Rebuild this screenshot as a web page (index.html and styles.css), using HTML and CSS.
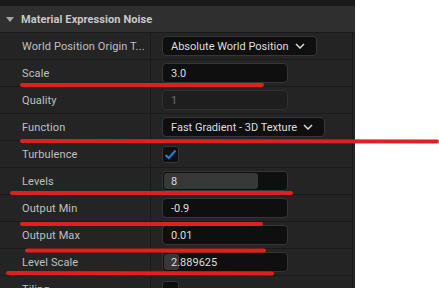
FILE: index.html
```html
<!DOCTYPE html>
<html lang="en">
<head>
    <meta charset="UTF-8">
    <title>Material Expression Noise</title>
    <link rel="stylesheet" href="styles.css">
</head>
<body>

    <!-- Details panel -->
    <div class="panel">
        <div class="topbar"></div>

        <div class="header">
            <span class="arrow"></span>
            <span>Material Expression Noise</span>
        </div>

        <div class="row">
            <div class="name">World Position Origin T...</div>
            <div class="value">
                <div class="combo">Absolute World Position
                    <svg width="10" height="6" viewBox="0 0 10 6"><polyline points="1,1 5,5 9,1" /></svg>
                </div>
            </div>
        </div>

        <div class="row">
            <div class="name">Scale</div>
            <div class="value"><div class="field">3.0</div></div>
        </div>

        <div class="row">
            <div class="name">Quality</div>
            <div class="value"><div class="field disabled">1</div></div>
        </div>

        <div class="row">
            <div class="name">Function</div>
            <div class="value">
                <div class="combo">Fast Gradient - 3D Texture
                    <svg width="10" height="6" viewBox="0 0 10 6"><polyline points="1,1 5,5 9,1" /></svg>
                </div>
            </div>
        </div>

        <div class="row">
            <div class="name">Turbulence</div>
            <div class="value">
                <div class="check">
                    <svg width="13" height="11" viewBox="0 0 13 11"><polyline points="1.5,6 4.8,9 11.5,1.5" /></svg>
                </div>
            </div>
        </div>

        <div class="row">
            <div class="name">Levels</div>
            <div class="value">
                <div class="field slider"><span class="fill" style="width: 94px"></span><span class="num">8</span></div>
            </div>
        </div>

        <div class="row">
            <div class="name">Output Min</div>
            <div class="value"><div class="field">-0.9</div></div>
        </div>

        <div class="row">
            <div class="name">Output Max</div>
            <div class="value"><div class="field">0.01</div></div>
        </div>

        <div class="row">
            <div class="name">Level Scale</div>
            <div class="value">
                <div class="field slider"><span class="fill" style="width: 15px"></span><span class="num">2.889625</span></div>
            </div>
        </div>

        <div class="row">
            <div class="name">Tiling</div>
            <div class="value"><div class="check"></div></div>
        </div>
    </div>

    <!-- Red marks drawn over the screenshot -->
    <svg class="marks" width="439" height="288" viewBox="0 0 439 288">
        <line x1="22" y1="85" x2="262" y2="85" />
        <line x1="22" y1="141" x2="437" y2="141.5" />
        <line x1="12" y1="193" x2="291" y2="193" />
        <line x1="22" y1="224" x2="261" y2="224" />
        <line x1="27" y1="250.5" x2="264" y2="250.5" />
        <line x1="8" y1="273" x2="272" y2="273.5" />
    </svg>

</body>
</html>
```

FILE: styles.css
```css
body {
    margin: 0;
    background-color: white;
    font-family: Roboto, "Liberation Sans", sans-serif;
    font-size: 11px;
    position: relative;
    height: 288px;
    overflow: hidden;
}
.panel {
    width: 355px;
    height: 288px;
    background-color: #242424;
    overflow: hidden;
}
.topbar {
    height: 6px;
    background-color: #1a1a1a;
}
.header {
    height: 26px;
    background-color: #2f2f2f;
    border-bottom: 1px solid #1a1a1a;
    display: flex;
    align-items: center;
    color: #c8c8c8;
    font-weight: bold;
    letter-spacing: 0.08px;
}
.arrow {
    width: 0;
    height: 0;
    margin: 1px 7px 0 6px;
    border-left: 4.5px solid transparent;
    border-right: 4.5px solid transparent;
    border-top: 5px solid #a6a6a6;
}
.row {
    height: 26px;
    display: flex;
    border-bottom: 1px solid #1a1a1a;
    margin-right: 2px;
    border-right: 1px solid #1a1a1a;
}
.name {
    width: 128px;
    padding-left: 22px;
    border-right: 1px solid #1a1a1a;
    color: #c0c0c0;
    display: flex;
    align-items: center;
    white-space: nowrap;
    letter-spacing: 0.12px;
}
.value {
    padding-left: 11px;
    display: flex;
    align-items: center;
}
.field, .combo {
    height: 18px;
    box-sizing: content-box;
    background-color: #0f0f0f;
    border: 1px solid #363636;
    border-radius: 4px;
    color: #dedede;
    display: flex;
    align-items: center;
}
.field {
    width: 116px;
    padding-left: 8px;
    position: relative;
    overflow: hidden;
}
.field.disabled {
    background-color: #1e1e1e;
    border-color: #303030;
    color: #6c6c6c;
}
.combo {
    padding: 0 11px 0 8px;
    gap: 6px;
    white-space: nowrap;
}
.combo svg polyline {
    fill: none;
    stroke: #d8d8d8;
    stroke-width: 1.5;
}
.slider {
    padding-left: 0;
    width: 124px;
}
.slider .fill {
    align-self: stretch;
    margin: 1px 0 1px 1px;
    background-color: #383838;
    border-radius: 3px;
    flex-shrink: 0;
}
.slider .num {
    position: absolute;
    left: 8px;
}
.check {
    width: 15px;
    height: 15px;
    background-color: #0f0f0f;
    border: 1px solid #363636;
    border-radius: 3px;
    display: flex;
    align-items: center;
    justify-content: center;
}
.check svg polyline {
    fill: none;
    stroke: #1f7fe0;
    stroke-width: 2;
}
.marks {
    position: absolute;
    left: 0;
    top: 0;
}
.marks line {
    stroke: #e01f1f;
    stroke-width: 4;
    stroke-linecap: round;
}
```
